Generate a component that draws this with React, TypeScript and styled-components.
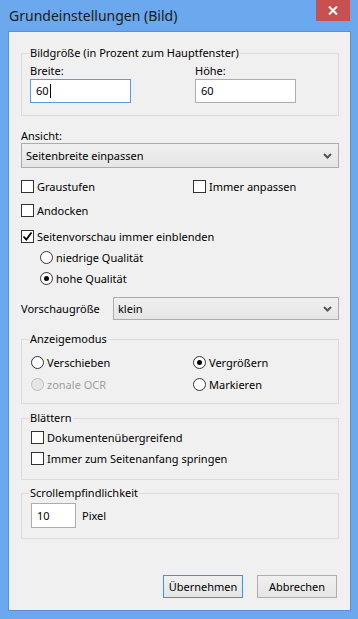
import styled, { createGlobalStyle } from "styled-components";

const Global = createGlobalStyle`
  html, body {
    margin: 0;
    padding: 0;
    background: #6ba8ee;
  }
  * {
    box-sizing: border-box;
  }
`;

const Window = styled.div`
  width: 358px;
  height: 619px;
  display: flex;
  flex-direction: column;
  background: #6ba8ee;
  padding: 0 7px 8px 8px;
  font-family: "Noto Sans", "Open Sans", sans-serif;
  font-size: 11px;
  color: #000;
`;

const TitleBar = styled.div`
  height: 31px;
  display: flex;
  align-items: flex-start;
  justify-content: space-between;
  margin-right: 1px;
`;

const Title = styled.div`
  font-size: 14px;
  line-height: 16px;
  padding: 8px 0 0 1px;
  color: #1a1a1a;
`;

const CloseButton = styled.div`
  width: 34px;
  height: 21px;
  background: #c75050;
  display: flex;
  align-items: center;
  justify-content: center;
`;

const Client = styled.div`
  flex: 1;
  background: #f0f0f0;
  border: 1px solid #5a91d4;
  padding: 13px 11px 0 12px;
  display: flex;
  flex-direction: column;
`;

const Group = styled.fieldset<{ $pt: number; $pb: number; $mt?: number }>`
  margin: ${(p) => p.$mt ?? 0}px 0 0 0;
  border: 1px solid #dcdcdc;
  padding: ${(p) => p.$pt}px 8px ${(p) => p.$pb}px 8px;
  min-width: 0;
`;

const Legend = styled.legend`
  padding: 0 1px;
  margin-left: -1px;
  line-height: 16px;
`;

const SizeGrid = styled.div`
  display: grid;
  grid-template-columns: 165px 1fr;
`;

const FieldLabel = styled.div<{ $h?: number; $mt?: number }>`
  line-height: ${(p) => p.$h ?? 17}px;
  margin-top: ${(p) => p.$mt ?? 0}px;
`;

const TextBox = styled.div<{ $focused?: boolean; $w: number }>`
  width: ${(p) => p.$w}px;
  height: 24px;
  background: #fff;
  border: 1px solid ${(p) => (p.$focused ? "#569de5" : "#abadb3")};
  padding: 0 5px;
  display: flex;
  align-items: center;
  line-height: 16px;
`;

const Caret = styled.span`
  display: inline-block;
  width: 1px;
  height: 14px;
  background: #000;
  margin-left: 1px;
`;

const Combo = styled.div<{ $h: number }>`
  height: ${(p) => p.$h}px;
  border: 1px solid #acacac;
  background: linear-gradient(#f0f0f0, #e5e5e5);
  display: flex;
  align-items: center;
  justify-content: space-between;
  padding: 0 6px 0 4px;
`;

const CheckGrid = styled.div`
  display: grid;
  grid-template-columns: 172px 1fr;
  row-gap: 7px;
  margin-top: 10px;
`;

const Option = styled.label<{ $disabled?: boolean; $mt?: number }>`
  display: flex;
  align-items: center;
  gap: 3px;
  height: 17px;
  margin-top: ${(p) => p.$mt ?? 0}px;
  color: ${(p) => (p.$disabled ? "#9d9d9d" : "#000")};
`;

const Box = styled.span`
  width: 13px;
  height: 13px;
  border: 1px solid #333;
  background: #fff;
  display: flex;
  align-items: center;
  justify-content: center;
  flex-shrink: 0;
`;

const Circle = styled.span<{ $disabled?: boolean }>`
  width: 13px;
  height: 13px;
  border-radius: 50%;
  border: 1px solid ${(p) => (p.$disabled ? "#bcbcbc" : "#333")};
  background: ${(p) => (p.$disabled ? "#e6e6e6" : "#fff")};
  display: flex;
  align-items: center;
  justify-content: center;
  flex-shrink: 0;
`;

const Dot = styled.span`
  width: 5px;
  height: 5px;
  border-radius: 50%;
  background: #000;
`;

const RadioStack = styled.div`
  display: flex;
  flex-direction: column;
  gap: 4px;
  margin: 4px 0 0 19px;
`;

const InlineRow = styled.div`
  display: grid;
  grid-template-columns: 92px 1fr;
  align-items: center;
  margin-top: 10px;
`;

const ModeGrid = styled.div`
  display: grid;
  grid-template-columns: 162px 1fr;
  row-gap: 5px;
  margin-left: 1px;
`;

const Stack = styled.div<{ $gap: number }>`
  display: flex;
  flex-direction: column;
  gap: ${(p) => p.$gap}px;
  margin-left: 1px;
`;

const PixelRow = styled.div`
  display: flex;
  align-items: center;
  gap: 6px;
  margin-left: 1px;
`;

const ButtonBar = styled.div`
  display: flex;
  justify-content: flex-end;
  gap: 14px;
  margin: 36px 2px 0 0;
`;

const Button = styled.div<{ $default?: boolean }>`
  width: 80px;
  height: 23px;
  display: flex;
  align-items: center;
  justify-content: center;
  border: 1px solid ${(p) => (p.$default ? "#3c94e8" : "#adadad")};
  background: linear-gradient(#f0f0f0, #e5e5e5);
`;

function Chevron() {
  return (
    <svg width="9" height="6" viewBox="0 0 9 6">
      <path d="M1 1l3.5 3.5L8 1" fill="none" stroke="#555" strokeWidth="2" />
    </svg>
  );
}

function CheckBox({ label, checked, mt }: { label: string; checked?: boolean; mt?: number }) {
  return (
    <Option $mt={mt}>
      <Box>
        {checked && (
          <svg width="11" height="11" viewBox="0 0 11 11">
            <path d="M1.5 5.5l2.8 3L9.5 1.5" fill="none" stroke="#000" strokeWidth="1.8" />
          </svg>
        )}
      </Box>
      {label}
    </Option>
  );
}

function Radio({ label, checked, disabled }: { label: string; checked?: boolean; disabled?: boolean }) {
  return (
    <Option $disabled={disabled}>
      <Circle $disabled={disabled}>{checked && <Dot />}</Circle>
      {label}
    </Option>
  );
}

export default function App() {
  return (
    <>
      <Global />
      <Window>
        <TitleBar>
          <Title>Grundeinstellungen (Bild)</Title>
          <CloseButton>
            <svg width="10" height="9" viewBox="0 0 10 9">
              <path d="M1 0.5l8 8M9 0.5l-8 8" stroke="#fff" strokeWidth="2" />
            </svg>
          </CloseButton>
        </TitleBar>
        <Client>
          <Group $pt={1} $pb={12}>
            <Legend>Bildgröße (in Prozent zum Hauptfenster)</Legend>
            <SizeGrid>
              <div>
                <FieldLabel>Breite:</FieldLabel>
                <TextBox $w={101} $focused>
                  60
                  <Caret />
                </TextBox>
              </div>
              <div>
                <FieldLabel>Höhe:</FieldLabel>
                <TextBox $w={101}>60</TextBox>
              </div>
            </SizeGrid>
          </Group>

          <FieldLabel $h={14} $mt={13}>Ansicht:</FieldLabel>
          <Combo $h={25}>
            Seitenbreite einpassen
            <Chevron />
          </Combo>

          <CheckGrid>
            <CheckBox label="Graustufen" />
            <CheckBox label="Immer anpassen" />
            <CheckBox label="Andocken" />
          </CheckGrid>
          <CheckBox label="Seitenvorschau immer einblenden" checked mt={9} />
          <RadioStack>
            <Radio label="niedrige Qualität" />
            <Radio label="hohe Qualität" checked />
          </RadioStack>

          <InlineRow>
            <span>Vorschaugröße</span>
            <Combo $h={23}>
              klein
              <Chevron />
            </Combo>
          </InlineRow>

          <Group $pt={7} $pb={10} $mt={11}>
            <Legend>Anzeigemodus</Legend>
            <ModeGrid>
              <Radio label="Verschieben" />
              <Radio label="Vergrößern" checked />
              <Radio label="zonale OCR" disabled />
              <Radio label="Markieren" />
            </ModeGrid>
          </Group>

          <Group $pt={3} $pb={12} $mt={6}>
            <Legend>Blättern</Legend>
            <Stack $gap={4}>
              <CheckBox label="Dokumentenübergreifend" />
              <CheckBox label="Immer zum Seitenanfang springen" />
            </Stack>
          </Group>

          <Group $pt={2} $pb={10} $mt={5}>
            <Legend>Scrollempfindlichkeit</Legend>
            <PixelRow>
              <TextBox $w={45} style={{ height: 25 }}>10</TextBox>
              Pixel
            </PixelRow>
          </Group>

          <ButtonBar>
            <Button $default>Übernehmen</Button>
            <Button>Abbrechen</Button>
          </ButtonBar>
        </Client>
      </Window>
    </>
  );
}
